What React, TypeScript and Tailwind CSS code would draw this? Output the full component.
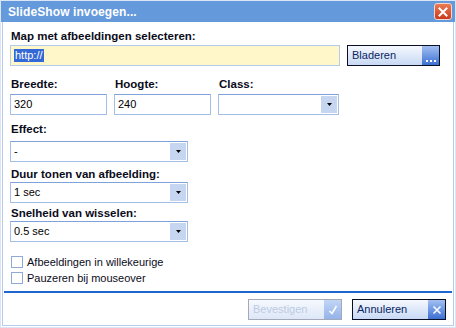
import React from 'react';

const font = { fontFamily: '"Liberation Sans", Arial, sans-serif' };

function Label({ children, className = '' }: { children: React.ReactNode; className?: string }) {
  return <div className={`text-[11.5px] leading-[14px] font-bold text-[#0b0b1a] pl-[1px] ${className}`}>{children}</div>;
}

function TextBox({ value, className = '' }: { value: string; className?: string }) {
  return (
    <div className={`h-[21px] border border-[#a3bfe8] border-t-[#7fa2db] bg-white flex items-center px-[3px] text-[11px] text-black ${className}`}>
      {value}
    </div>
  );
}

function Select({ value, className = '' }: { value: string; className?: string }) {
  return (
    <div className={`h-[21px] border border-[#a3bfe8] border-t-[#7fa2db] bg-white flex items-center p-[1px] text-[11px] text-black ${className}`}>
      <span className="flex-1 pl-[2px]">{value}</span>
      <div className="w-[16px] h-full bg-[#c6d6f0] flex items-center justify-center">
        <svg width="5" height="3" viewBox="0 0 5 3">
          <path d="M0 0h5L2.5 3z" fill="#000" />
        </svg>
      </div>
    </div>
  );
}

function Checkbox({ label }: { label: string }) {
  return (
    <div className="flex items-center h-[16px]">
      <div className="w-[12px] h-[12px] border border-[#8eabd8] bg-white ml-[1px]" />
      <span className="ml-[4px] text-[11px] text-[#0b0b1a]">{label}</span>
    </div>
  );
}

function Dots() {
  return (
    <div className="flex gap-[2px] items-end pb-[3px] h-full">
      <div className="w-[2px] h-[2px] bg-white" />
      <div className="w-[2px] h-[2px] bg-white" />
      <div className="w-[2px] h-[2px] bg-white" />
    </div>
  );
}

export default function App() {
  return (
    <div className="w-[456px] h-[328px] bg-white relative overflow-hidden" style={font}>
      <div className="h-full flex flex-col border border-[#dbe5f6]">
        {/* title bar */}
        <div className="h-[21px] bg-[#6499dc] flex items-center justify-between pl-[7px] pr-[3px] shrink-0">
          <span className="text-white font-bold text-[12px] tracking-[0.1px]">SlideShow invoegen...</span>
          <div className="w-[18px] h-[17px] rounded-[3px] border border-[#f4d6cc] bg-gradient-to-b from-[#ec7a52] to-[#c9381a] flex items-center justify-center">
            <svg width="10" height="10" viewBox="0 0 10 10">
              <path d="M1.5 1.5l7 7M8.5 1.5l-7 7" stroke="#fff" strokeWidth="2" strokeLinecap="square" />
            </svg>
          </div>
        </div>

        <div className="flex-1 flex flex-col border-x border-b border-[#b7cbee] mx-[1px] mb-[1px]">
          <div className="flex flex-col pl-[7px] pt-[7px]">
            <Label>Map met afbeeldingen selecteren:</Label>
            <div className="flex items-center mt-[2px]">
              <div className="w-[330px] h-[21px] border border-[#b4cbeb] bg-[#fff6c9] flex items-center px-[3px] text-[11px]">
                <span className="bg-[#3369d6] text-white leading-[13px] px-[1px]">http://</span>
              </div>
              <div className="ml-[7px] w-[93px] h-[21px] border border-[#0a0f24] flex">
                <div className="flex-1 bg-gradient-to-b from-[#f5f8fe] to-[#c8d9f4] text-[11px] text-[#0a2563] flex items-center pl-[4px]">Bladeren</div>
                <div className="w-[17px] bg-gradient-to-b from-[#a3bff0] to-[#3c70d2] flex justify-center">
                  <Dots />
                </div>
              </div>
            </div>

            <div className="flex mt-[11px] gap-[7px]">
              <div className="w-[97px]">
                <Label>Breedte:</Label>
                <TextBox value="320" className="mt-[3px]" />
              </div>
              <div className="w-[97px]">
                <Label>Hoogte:</Label>
                <TextBox value="240" className="mt-[3px]" />
              </div>
              <div className="w-[121px]">
                <Label>Class:</Label>
                <Select value="" className="mt-[3px]" />
              </div>
            </div>

            <Label className="mt-[7px]">Effect:</Label>
            <Select value="-" className="w-[178px] mt-[5px]" />

            <Label className="mt-[5px]">Duur tonen van afbeelding:</Label>
            <Select value="1 sec" className="w-[178px] mt-[1px]" />

            <Label className="mt-[3px]">Snelheid van wisselen:</Label>
            <Select value="0.5 sec" className="w-[178px] mt-[1px]" />

            <div className="mt-[12px] flex flex-col">
              <Checkbox label="Afbeeldingen in willekeurige" />
              <Checkbox label="Pauzeren bij mouseover" />
            </div>
          </div>

          <div className="mt-[5px] mx-[1px] h-[2px] bg-[#1f66d3]" />

          <div className="flex justify-end pr-[7px] pt-[6px] gap-[10px]">
            <div className="w-[94px] h-[21px] border border-[#a3a9b6] flex">
              <div className="flex-1 bg-gradient-to-b from-[#f6f9fe] to-[#dde7f7] text-[11px] text-[#bccbe3] flex items-center pl-[4px]">Bevestigen</div>
              <div className="w-[17px] bg-gradient-to-b from-[#c2d5f5] to-[#93b3ea] flex items-center justify-center">
                <svg width="10" height="10" viewBox="0 0 10 10">
                  <path d="M1.5 6l2.5 2.5L8.5 1" stroke="#fff" strokeWidth="1.6" fill="none" />
                </svg>
              </div>
            </div>
            <div className="w-[94px] h-[21px] border border-[#0a0f24] flex">
              <div className="flex-1 bg-gradient-to-b from-[#f5f8fe] to-[#c8d9f4] text-[11px] text-[#0a2563] flex items-center pl-[4px]">Annuleren</div>
              <div className="w-[17px] bg-gradient-to-b from-[#a3bff0] to-[#3c70d2] flex items-center justify-center">
                <svg width="10" height="10" viewBox="0 0 10 10">
                  <path d="M1.5 1.5l7 7M8.5 1.5l-7 7" stroke="#fff" strokeWidth="1.5" />
                </svg>
              </div>
            </div>
          </div>
        </div>
      </div>
    </div>
  );
}
